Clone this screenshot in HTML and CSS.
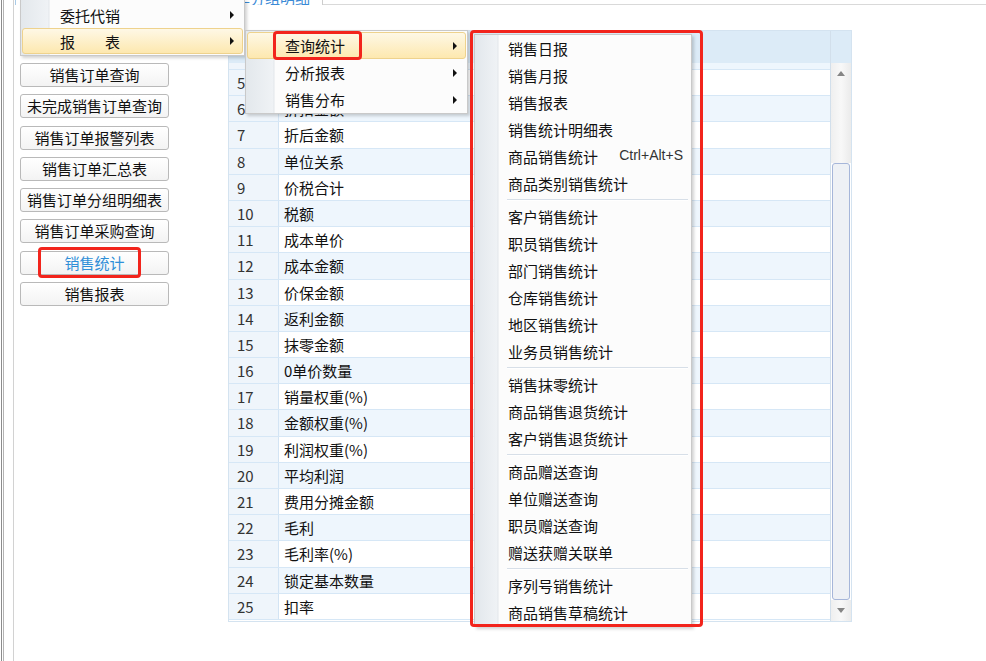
FILE: index.html
```html
<!DOCTYPE html>
<html lang="zh-CN">
<head>
    <meta charset="UTF-8">
    <meta name="viewport" content="width=device-width, initial-scale=1.0">
    <title>销售统计</title>
    <link rel="stylesheet" href="styles.css">
</head>
<body>
    <div class="window">
        <div class="edge"></div>
        <div class="workspace">
            <div class="tabs">
                <div class="tab"><span>销售订单分组明细</span></div>
                <div class="tab-rest"></div>
            </div>

            <div class="main">
                <!-- 左侧功能按钮 -->
                <div class="nav">
                    <button class="nav-btn">销售订单查询</button>
                    <button class="nav-btn">未完成销售订单查询</button>
                    <button class="nav-btn">销售订单报警列表</button>
                    <button class="nav-btn">销售订单汇总表</button>
                    <button class="nav-btn">销售订单分组明细表</button>
                    <button class="nav-btn">销售订单采购查询</button>
                    <button class="nav-btn active">销售统计</button>
                    <button class="nav-btn">销售报表</button>
                </div>

                <!-- 字段表格 -->
                <div class="grid">
                    <div class="grid-main">
                        <div class="grid-head"></div>
                        <div class="row even partial"><div class="num"></div><div class="cell"></div></div>
                        <div class="row"><div class="num">5</div><div class="cell">折扣</div></div>
                        <div class="row even"><div class="num">6</div><div class="cell">折扣金额</div></div>
                        <div class="row"><div class="num">7</div><div class="cell">折后金额</div></div>
                        <div class="row even"><div class="num">8</div><div class="cell">单位关系</div></div>
                        <div class="row"><div class="num">9</div><div class="cell">价税合计</div></div>
                        <div class="row even"><div class="num">10</div><div class="cell">税额</div></div>
                        <div class="row"><div class="num">11</div><div class="cell">成本单价</div></div>
                        <div class="row even"><div class="num">12</div><div class="cell">成本金额</div></div>
                        <div class="row"><div class="num">13</div><div class="cell">价保金额</div></div>
                        <div class="row even"><div class="num">14</div><div class="cell">返利金额</div></div>
                        <div class="row"><div class="num">15</div><div class="cell">抹零金额</div></div>
                        <div class="row even"><div class="num">16</div><div class="cell">0单价数量</div></div>
                        <div class="row"><div class="num">17</div><div class="cell">销量权重(%)</div></div>
                        <div class="row even"><div class="num">18</div><div class="cell">金额权重(%)</div></div>
                        <div class="row"><div class="num">19</div><div class="cell">利润权重(%)</div></div>
                        <div class="row even"><div class="num">20</div><div class="cell">平均利润</div></div>
                        <div class="row"><div class="num">21</div><div class="cell">费用分摊金额</div></div>
                        <div class="row even"><div class="num">22</div><div class="cell">毛利</div></div>
                        <div class="row"><div class="num">23</div><div class="cell">毛利率(%)</div></div>
                        <div class="row even"><div class="num">24</div><div class="cell">锁定基本数量</div></div>
                        <div class="row"><div class="num">25</div><div class="cell">扣率</div></div>
                    </div>
                    <div class="vscroll">
                        <div class="corner"></div>
                        <div class="sb-btn up"><i></i></div>
                        <div class="sb-track"></div>
                        <div class="sb-thumb"></div>
                        <div class="sb-btn down"><i></i></div>
                    </div>
                </div>
            </div>
        </div>
    </div>

    <!-- 弹出菜单 -->
    <div class="menu menu-main">
        <div class="menu-item sub">委托代销</div>
        <div class="menu-item sub hot">报　　表</div>
    </div>

    <div class="menu menu-sub">
        <div class="menu-item sub hot">查询统计</div>
        <div class="menu-item sub">分析报表</div>
        <div class="menu-item sub">销售分布</div>
    </div>

    <div class="menu menu-stat">
        <div class="menu-item">销售日报</div>
        <div class="menu-item">销售月报</div>
        <div class="menu-item">销售报表</div>
        <div class="menu-item">销售统计明细表</div>
        <div class="menu-item">商品销售统计<span class="shortcut">Ctrl+Alt+S</span></div>
        <div class="menu-item">商品类别销售统计</div>
        <div class="sep"></div>
        <div class="menu-item">客户销售统计</div>
        <div class="menu-item">职员销售统计</div>
        <div class="menu-item">部门销售统计</div>
        <div class="menu-item">仓库销售统计</div>
        <div class="menu-item">地区销售统计</div>
        <div class="menu-item">业务员销售统计</div>
        <div class="sep"></div>
        <div class="menu-item">销售抹零统计</div>
        <div class="menu-item">商品销售退货统计</div>
        <div class="menu-item">客户销售退货统计</div>
        <div class="sep"></div>
        <div class="menu-item">商品赠送查询</div>
        <div class="menu-item">单位赠送查询</div>
        <div class="menu-item">职员赠送查询</div>
        <div class="menu-item">赠送获赠关联单</div>
        <div class="sep"></div>
        <div class="menu-item">序列号销售统计</div>
        <div class="menu-item">商品销售草稿统计</div>
    </div>

    <!-- 红框标注 -->
    <div class="mark mark-btn"></div>
    <div class="mark mark-sub"></div>
    <div class="mark mark-menu"></div>
</body>
</html>
```

FILE: styles.css
```css
* {
    margin: 0;
    padding: 0;
    box-sizing: border-box;
}

body {
    font-family: "Noto Sans CJK SC", "Microsoft YaHei", sans-serif;
    font-size: 15px;
    color: #111;
    background: #fff;
    width: 986px;
    height: 661px;
    overflow: hidden;
    position: relative;
}

.window {
    display: flex;
    height: 661px;
}

.edge {
    width: 14px;
    flex: none;
    background: linear-gradient(to right, #fff 0 1px, #8c8c8c 1px 2px, #fff 2px 3px, #b4b4b4 3px 4px, #fff 4px 13px, #d2d2d2 13px 14px);
}

.workspace {
    flex: 1;
    display: flex;
    flex-direction: column;
}

/* 顶部标签 */
.tabs {
    display: flex;
    height: 5px;
}

.tab {
    width: 308px;
    margin-left: 1px;
    height: 5px;
    border-left: 1px solid #a9cbe8;
    border-right: 1px solid #cdcdcd;
    overflow: hidden;
    text-align: right;
    padding-right: 12px;
}

.tab span {
    display: block;
    color: #3a8ad6;
    line-height: 15px;
    margin-top: -10px;
}

.tab-rest {
    flex: 1;
    border-bottom: 1px solid #d9d9d9;
}

.main {
    display: flex;
    flex: 1;
}

/* 左侧按钮 */
.nav {
    width: 214px;
    flex: none;
    padding: 58px 0 0 6px;
}

.nav-btn {
    display: block;
    width: 149px;
    height: 24px;
    margin-bottom: 7.3px;
    border: 1px solid #b9b9b9;
    border-radius: 3px;
    background: linear-gradient(#fff, #f3f3f3);
    font: inherit;
    line-height: 22px;
    color: #111;
    text-align: center;
}

.nav-btn.active {
    color: #2f8fd8;
}

/* 表格 */
.grid {
    width: 624px;
    height: 592px;
    margin-top: 25px;
    border: 1px solid #d4e3f0;
    display: flex;
}

.grid-main {
    flex: 1;
    overflow: hidden;
}

.grid-head {
    height: 32px;
    background: #dcebf7;
}

.row {
    display: flex;
    height: 26.2px;
    border-bottom: 1px solid #d6e7f6;
    line-height: 25px;
}

.row.partial {
    height: 7px;
}

.num {
    width: 50px;
    flex: none;
    padding-left: 8px;
    background: #eff5fb;
    border-right: 1px solid #d3e4f4;
    color: #333;
}

.cell {
    flex: 1;
    padding-left: 5px;
    background: #fff;
}

.row.even .cell {
    background: #eef6fd;
}

/* 滚动条 */
.vscroll {
    width: 21px;
    flex: none;
    border-left: 1px solid #d2dfeb;
    display: flex;
    flex-direction: column;
}

.corner {
    height: 32px;
    flex: none;
    background: #dcebf7;
}

.sb-btn,
.sb-track {
    background: linear-gradient(to right, #efefef, #f8f8f8 50%, #ebebeb);
}

.sb-btn {
    height: 20px;
    flex: none;
    display: flex;
    align-items: center;
    justify-content: center;
}

.sb-btn i {
    border-left: 4px solid transparent;
    border-right: 4px solid transparent;
}

.sb-btn.up i {
    border-bottom: 5px solid #858585;
}

.sb-btn.down {
    flex: 1;
}

.sb-btn.down i {
    border-top: 5px solid #858585;
}

.sb-track {
    height: 80px;
    flex: none;
}

.sb-thumb {
    height: 437px;
    flex: none;
    margin: 0 1px;
    border: 1px solid #a6b6d9;
    border-radius: 3px;
    background: #eef1f5;
}

/* 菜单 */
.menu {
    position: absolute;
    background: #fcfcfc;
    border: 1px solid #c9c9c9;
    box-shadow: 2px 2px 3px rgba(0, 0, 0, 0.18);
}

.menu-item {
    position: relative;
    display: flex;
    align-items: center;
    justify-content: space-between;
    margin: 0 1px;
    border: 1px solid transparent;
    white-space: nowrap;
    color: #111;
}

.menu-item.hot {
    border-color: #eed28d;
    border-radius: 3px;
    background: linear-gradient(#fef8e6, #fde8af);
}

.menu-item.sub::after {
    content: "";
    position: absolute;
    top: 50%;
    right: 8px;
    margin-top: -4px;
    border-left: 4px solid #111;
    border-top: 4px solid transparent;
    border-bottom: 4px solid transparent;
}

.menu-main {
    left: 20px;
    top: -1px;
    width: 225px;
    padding: 2px 0 1px;
    background: linear-gradient(to right, #e3e8ec, #eff2f5 27px, #e2e6ea 28px, #fcfcfc 29px);
}

.menu-main .menu-item {
    height: 26px;
    padding-left: 37px;
}

.menu-sub {
    left: 245px;
    top: 30px;
    width: 223px;
    padding-top: 1px;
    background: linear-gradient(to right, #e3e8ec, #eff2f5 27px, #e2e6ea 28px, #fcfcfc 29px);
}

.menu-sub .menu-item {
    height: 27px;
    padding-left: 37px;
}

.menu-stat {
    left: 474px;
    top: 34px;
    width: 218px;
    background: linear-gradient(to right, #e2e7ec, #eff2f5 22px, #e2e6ea 23px, #fcfcfc 24px);
}

.menu-stat .menu-item {
    height: 27px;
    padding: 0 6px 0 31px;
}

.shortcut {
    font-family: "Liberation Sans", Arial, sans-serif;
    font-size: 14px;
    color: #333;
    margin-bottom: 4px;
}

.sep {
    height: 6px;
    margin: 0 3px 0 32px;
    background: linear-gradient(transparent 2px, #d7dfe8 2px 3px, #fff 3px 4px, transparent 4px);
}

/* 标注红框 */
.mark {
    position: absolute;
    border: 3px solid #f2241c;
    border-radius: 4px;
}

.mark-btn {
    left: 38px;
    top: 247px;
    width: 103px;
    height: 31px;
}

.mark-sub {
    left: 273px;
    top: 31px;
    width: 89px;
    height: 29px;
}

.mark-menu {
    left: 470px;
    top: 30px;
    width: 233px;
    height: 597px;
}
```
